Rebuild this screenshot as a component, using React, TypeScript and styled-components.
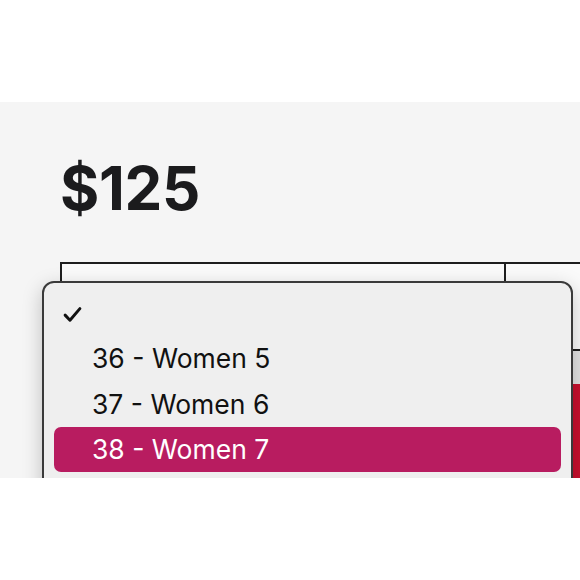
import {} from 'react'
import styled, {createGlobalStyle} from 'styled-components'

const sizes = ['36 - Women 5', '37 - Women 6', '38 - Women 7']
const active = '38 - Women 7'

const App = () => {
  return (
    <>
      <GlobalStyle />
      <Page>
        <Section>
          <Price>$125</Price>
          <SelectRow>
            <SelectBox />
            <SelectBox />
          </SelectRow>
          <Hint />
          <CartBtn />

          <Menu>
            <Option>
              <Check viewBox="0 0 18 16">
                <path d="M2 8.6 L6.6 13.4 L16 2.4" />
              </Check>
            </Option>
            {sizes.map(s => (
              <Option key={s} selected={s === active}>
                {s}
              </Option>
            ))}
          </Menu>
        </Section>
      </Page>
    </>
  )
}

const GlobalStyle = createGlobalStyle`
  body {
    margin: 0;
    background: #ffffff;
    font-family: Inter, "Liberation Sans", sans-serif;
  }
`
const Page = styled('div')`
  width: 580px;
  height: 580px;
  padding-top: 102px;
  box-sizing: border-box;
  overflow: hidden;
`
const Section = styled('div')`
  position: relative;
  height: 376px;
  padding: 56px 0 0 60px;
  box-sizing: border-box;
  background: #f5f5f5;
  overflow: hidden;
`
const Price = styled('div')`
  font-size: 60px;
  line-height: 60px;
  font-weight: 700;
  color: #1b1b1d;
  letter-spacing: -0.3px;
`
const SelectRow = styled('div')`
  display: grid;
  grid-template-columns: 446px 200px;
  margin-top: 44px;
  height: 89px;
`
const SelectBox = styled('div')`
  border: 2px solid #1e1e1e;
  background: #fafafa;
  & + & {
    border-left: none;
  }
`
const Hint = styled('div')`
  height: 33px;
  background: #e2e2e2;
`
const CartBtn = styled('div')`
  height: 120px;
  background: #c8102e;
`
const Menu = styled('div')`
  position: absolute;
  left: 42px;
  top: 179px;
  width: 531px;
  height: 260px;
  box-sizing: border-box;
  padding: 7px 10px;
  background: #efefef;
  border: 2px solid #3a3a3a;
  border-radius: 12px;
  box-shadow: 0 6px 20px rgba(0, 0, 0, 0.22);
`
const Option = styled('div')<{selected?: boolean}>`
  height: 45.5px;
  display: flex;
  align-items: center;
  padding-left: 38px;
  border-radius: 7px;
  font-size: 26.5px;
  color: ${p => (p.selected ? '#ffffff' : '#111111')};
  background: ${p => (p.selected ? '#b81c60' : 'transparent')};
  position: relative;
`
const Check = styled('svg')`
  position: absolute;
  left: 9px;
  top: 16px;
  width: 19px;
  height: 17px;
  fill: none;
  stroke: #111;
  stroke-width: 2.8;
  stroke-linecap: round;
  stroke-linejoin: round;
`

export default App
